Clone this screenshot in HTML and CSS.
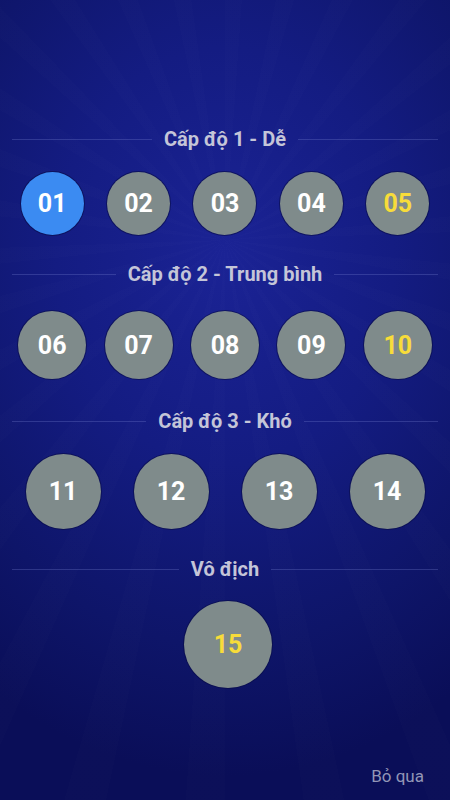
FILE: index.html
```html
<!DOCTYPE html>
<html lang="vi">
<head>
    <meta charset="UTF-8">
    <meta name="viewport" content="width=device-width, initial-scale=1.0">
    <title>Chọn câu hỏi</title>
    <link rel="stylesheet" href="styles.css">
</head>
<body>
    <div class="screen">
        <div class="levels">
            <div class="level level-1">
                <div class="level-title">Cấp độ 1 - Dễ</div>
                <div class="level-row cols-5">
                    <div class="ball active">01</div>
                    <div class="ball">02</div>
                    <div class="ball">03</div>
                    <div class="ball">04</div>
                    <div class="ball milestone">05</div>
                </div>
            </div>
            <div class="level level-2">
                <div class="level-title">Cấp độ 2 - Trung bình</div>
                <div class="level-row cols-5">
                    <div class="ball">06</div>
                    <div class="ball">07</div>
                    <div class="ball">08</div>
                    <div class="ball">09</div>
                    <div class="ball milestone">10</div>
                </div>
            </div>
            <div class="level level-3">
                <div class="level-title">Cấp độ 3 - Khó</div>
                <div class="level-row cols-4">
                    <div class="ball">11</div>
                    <div class="ball">12</div>
                    <div class="ball">13</div>
                    <div class="ball">14</div>
                </div>
            </div>
            <div class="level level-4">
                <div class="level-title">Vô địch</div>
                <div class="level-row cols-1">
                    <div class="ball milestone">15</div>
                </div>
            </div>
        </div>
        <div class="footer">
            <span class="skip">Bỏ qua</span>
        </div>
    </div>
</body>
</html>
```

FILE: styles.css
```css
html, body {
	margin: 0;
	padding: 0;
}

body {
	font-family: Roboto, "Noto Sans", sans-serif;
	background: #0b105c;
}

.screen {
	height: 800px;
	display: flex;
	flex-direction: column;
	background:
		repeating-conic-gradient(from 0deg at 50% 30%, rgba(255, 255, 255, 0.008) 0deg 4deg, rgba(255, 255, 255, 0) 4deg 12deg),
		radial-gradient(ellipse 420px 520px at 50% 32%, #1b2395 0%, #141c82 40%, #0e1569 75%, #0a0e58 100%);
}

.levels {
	padding-top: 127px;
}

.level-title {
	display: flex;
	align-items: center;
	gap: 12px;
	padding: 0 12px;
	font-size: 20px;
	font-weight: 700;
	line-height: 24px;
	color: #c4c5d8;
	white-space: nowrap;
}

.level-title::before,
.level-title::after {
	content: "";
	flex: 1;
	height: 1px;
	background: rgba(120, 130, 210, 0.3);
}

.level-row {
	display: grid;
	padding: 0 9px;
	justify-items: center;
}

.cols-5 {
	grid-template-columns: repeat(5, 1fr);
}

.cols-4 {
	grid-template-columns: repeat(4, 1fr);
}

.cols-1 {
	grid-template-columns: 1fr;
}

.ball {
	display: flex;
	align-items: center;
	justify-content: center;
	border-radius: 50%;
	background: #7f8b8b;
	box-shadow: 0 0 0 1px rgba(8, 12, 70, 0.6);
	color: #fff;
	font-size: 25px;
	font-weight: 700;
}

.ball.active {
	background: #3b8bf2;
}

.ball.milestone {
	color: #f7dc3a;
}

.level-1 .level-row {
	margin-top: 21px;
}

.level-1 .ball {
	width: 63px;
	height: 63px;
}

.level-2 {
	margin-top: 27px;
}

.level-2 .level-row {
	margin-top: 25px;
}

.level-2 .ball {
	width: 68px;
	height: 68px;
}

.level-3 {
	margin-top: 30px;
}

.level-3 .level-row {
	margin-top: 21px;
}

.level-3 .ball {
	width: 75px;
	height: 75px;
}

.level-4 {
	margin-top: 28px;
}

.level-4 .level-row {
	margin-top: 20px;
	padding-left: 15px;
}

.level-4 .ball {
	width: 88px;
	height: 87px;
}

.footer {
	margin-top: auto;
	padding: 0 26px 14px 0;
	text-align: right;
}

.skip {
	font-size: 17px;
	line-height: 20px;
	color: #9296b6;
}
```
